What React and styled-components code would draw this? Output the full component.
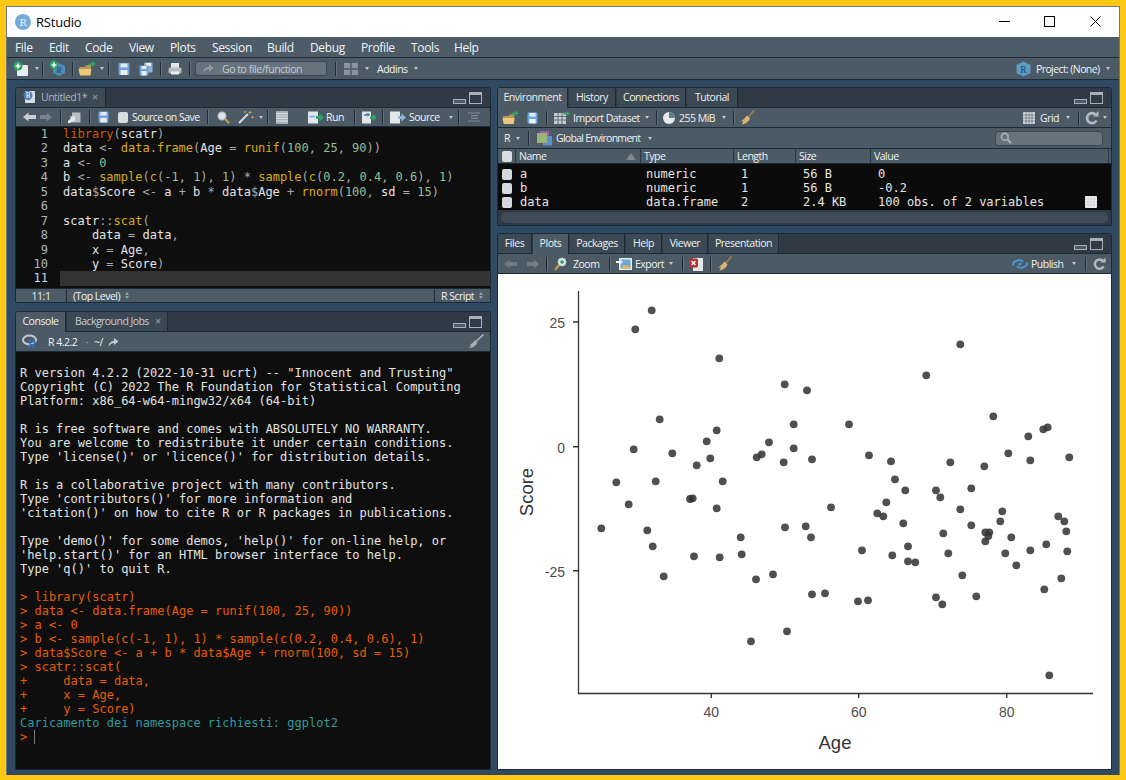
import React from "react";
import styled, { createGlobalStyle, css } from "styled-components";

const Global = createGlobalStyle`
  html, body { margin: 0; padding: 0; background: #ffc815; overflow: hidden; }
  #root { width: 1126px; height: 780px; }
  * { box-sizing: border-box; }
`;

const UI = `"Open Sans", "Noto Sans", sans-serif`;
const MONO = `"DejaVu Sans Mono", monospace`;

const place = css`
  flex: none;
  margin-left: ${(p) => (p.$auto ? "auto" : `${p.$ml || 0}px`)};
`;

const Window = styled.div`
  margin: 6px 6px 0;
  width: 1114px;
  height: 769px;
  border: 1px solid #6d7780;
  border-bottom: 0;
  background: #2f4a62;
  display: flex;
  flex-direction: column;
  font-family: ${UI};
  color: #f0f3f5;
`;
const TitleBar = styled.div`
  height: 30px;
  background: #fff;
  color: #000;
  display: flex;
  align-items: center;
  padding: 0 0 1px 8px;
  font-size: 13px;
  letter-spacing: -0.2px;
`;
const TitleText = styled.span`
  margin-left: 5px;
`;
const WinButtons = styled.div`
  margin-left: auto;
  display: flex;
  align-items: center;
  padding-right: 18px;
`;
const WinBtn = styled.svg`
  ${place}
  display: block;
`;
const MenuBar = styled.div`
  height: 21px;
  background: #4e5c68;
  border-bottom: 1px solid #1b2a38;
  display: flex;
  align-items: center;
  padding-left: 8px;
  font-size: 12px;
  letter-spacing: -0.35px;
`;
const MenuItem = styled.span`
  flex: none;
  width: ${(p) => p.$w}px;
`;
const MainBar = styled.div`
  height: 22px;
  background: #4c5a66;
  border-bottom: 1px solid #1b2a38;
  display: flex;
  align-items: center;
  padding-right: 9px;
`;
const Main = styled.div`
  flex: 1;
  display: grid;
  grid-template-columns: 476px 615px;
  column-gap: 6px;
  padding: 7px 7px 5px 8px;
  min-height: 0;
`;
const Column = styled.div`
  display: flex;
  flex-direction: column;
  gap: ${(p) => p.$gap}px;
  min-height: 0;
`;
const Pane = styled.section`
  height: ${(p) => (p.$h ? `${p.$h}px` : "auto")};
  flex: ${(p) => (p.$h ? "none" : "1")};
  display: flex;
  flex-direction: column;
  border: 1px solid #1b2a38;
  border-radius: 3px 3px 0 0;
  background: #4c5a66;
  overflow: hidden;
  min-height: 0;
`;
const TabBar = styled.div`
  height: 20px;
  flex: none;
  background: #2f3a45;
  border-bottom: 1px solid #1b2a38;
  display: flex;
  align-items: stretch;
  padding-right: 8px;
`;
const Tab = styled.div`
  flex: none;
  width: ${(p) => p.$w}px;
  margin-right: 1px;
  background: ${(p) => (p.$active ? "#4c5a66" : "#3b4955")};
  border-right: 1px solid #1b2a38;
  margin-bottom: ${(p) => (p.$active ? "-1px" : "0")};
  color: ${(p) => (p.$dim ? "#a9b4bd" : "#eef1f3")};
  font-size: 10.5px;
  letter-spacing: -0.45px;
  padding-bottom: ${(p) => (p.$active ? "3px" : "2px")};
  display: flex;
  align-items: center;
  justify-content: ${(p) => (p.$start ? "flex-start" : "center")};
  padding-left: ${(p) => (p.$start ? `${p.$start}px` : "0")};
`;
const TabClose = styled.span`
  margin-left: ${(p) => p.$ml}px;
  color: #7f8b95;
  font-size: 11px;
  font-weight: 700;
`;
const PaneCtl = styled.div`
  margin-left: auto;
  display: flex;
  align-items: center;
  gap: 3px;
`;
const Tool = styled.div`
  height: ${(p) => p.$h || 19}px;
  flex: none;
  background: #4c5a66;
  border-bottom: 1px solid #1b2a38;
  display: flex;
  align-items: center;
  padding-right: ${(p) => p.$pr || 0}px;
`;
const Ic = styled.svg`
  ${place}
  display: block;
`;
const Sep = styled.i`
  ${place}
  width: 2px;
  height: 14px;
  border-left: 1px solid #1d2b38;
  border-right: 1px solid #63707b;
`;
const Caret = styled.i`
  ${place}
  width: 0;
  height: 0;
  border-left: 2.5px solid transparent;
  border-right: 2.5px solid transparent;
  border-top: 3px solid #c0c8ce;
`;
const Updown = styled.span`
  ${place}
  display: inline-flex;
  flex-direction: column;
  gap: 1px;
`;
const Tri = styled.i`
  display: block;
  width: 0;
  height: 0;
  border-left: 2.5px solid transparent;
  border-right: 2.5px solid transparent;
  ${(p) => (p.$up ? "border-bottom: 3px solid #96a1aa;" : "border-top: 3px solid #96a1aa;")}
`;
const Label = styled.span`
  ${place}
  width: ${(p) => p.$w}px;
  font-size: 10.5px;
  letter-spacing: ${(p) => p.$ls ?? -0.5}px;
  white-space: nowrap;
  color: ${(p) => p.$c || "#eef1f3"};
`;
const Check = styled.i`
  ${place}
  width: 10px;
  height: 11px;
  background: #d9dde0;
  border-radius: 2px;
`;
const GoBox = styled.div`
  ${place}
  width: 132px;
  height: 15px;
  border: 1px solid #39464f;
  border-radius: 3px;
  background: #66727c;
  display: flex;
  align-items: center;
  padding-left: 6px;
`;
const SearchBox = styled.div`
  ${place}
  width: 108px;
  height: 15px;
  border: 1px solid #39464f;
  border-radius: 3px;
  background: #66727c;
  display: flex;
  align-items: center;
  padding-left: 4px;
`;
const BarEnd = styled.i`
  flex: none;
  width: ${(p) => p.$w}px;
`;

const Editor = styled.div`
  flex: 1;
  background: #0e0e0e;
  font-family: ${MONO};
  font-size: 12px;
  color: #e4e4e4;
  overflow: hidden;
`;
const Line = styled.div`
  height: 14.45px;
  line-height: 14.45px;
  display: flex;
  white-space: pre;
`;
const Gutter = styled.span`
  width: 44px;
  flex: none;
  text-align: right;
  padding-right: 12px;
  color: ${(p) => (p.$active ? "#c8d6e2" : "#a8b8c4")};
`;
const Code = styled.span`
  flex: 1;
  padding-left: 3px;
  background: ${(p) => (p.$active ? "#333333" : "transparent")};
`;
const Kw = styled.span`color: #cf5a00;`;
const Fn = styled.span`color: #d9ac16;`;
const Num = styled.span`color: #93bf93;`;
const Op = styled.span`color: #a9a9a9;`;

const Status = styled.div`
  height: 14px;
  flex: none;
  background: #4c5a66;
  border-top: 1px solid #1b2a38;
  display: flex;
  align-items: center;
  font-size: 10.5px;
  letter-spacing: -0.5px;
  color: #eef1f3;
`;
const StatusCell = styled.div`
  flex: none;
  width: ${(p) => p.$w}px;
  height: 100%;
  display: flex;
  align-items: center;
  justify-content: ${(p) => (p.$center ? "center" : "flex-start")};
  padding-left: ${(p) => (p.$center ? 0 : 6)}px;
  border-right: ${(p) => (p.$br ? "1px solid #1b2a38" : "0")};
  margin-left: ${(p) => (p.$auto ? "auto" : 0)};
  border-left: ${(p) => (p.$auto ? "1px solid #1b2a38" : "0")};
`;

const Console = styled.pre`
  flex: 1;
  margin: 0;
  padding: 14px 0 0 4px;
  background: #0e0e0e;
  font-family: ${MONO};
  font-size: 12px;
  line-height: 14px;
  color: #e4e4e4;
  overflow: hidden;
`;
const Echo = styled.span`color: #e85d04;`;
const Msg = styled.span`color: #2f9c9c;`;
const CursorBar = styled.i`
  display: inline-block;
  width: 1px;
  height: 14px;
  vertical-align: -3px;
  background: #7a7a7a;
`;

const EnvHead = styled.div`
  height: 15px;
  flex: none;
  display: flex;
  background: #4c5a66;
  border-bottom: 1px solid #1b2a38;
`;
const HeadCell = styled.div`
  flex: none;
  width: ${(p) => p.$w}px;
  border-right: 1px solid #2a3946;
  display: flex;
  align-items: center;
  padding-left: ${(p) => p.$pl ?? 3}px;
  font-size: 10.5px;
  letter-spacing: -0.5px;
  color: #eef1f3;
`;
const SortTri = styled.i`
  margin-left: auto;
  margin-right: 4px;
  width: 0;
  height: 0;
  border-left: 5px solid transparent;
  border-right: 5px solid transparent;
  border-bottom: 7px solid #7d8891;
`;
const EnvBody = styled.div`
  height: 46px;
  flex: none;
  background: #0b0b0b;
  padding-top: 3px;
  font-family: ${MONO};
  font-size: 12px;
  color: #e6e6e6;
`;
const EnvRow = styled.div`
  height: 14px;
  line-height: 14px;
  display: flex;
  align-items: center;
  white-space: pre;
`;
const EnvCell = styled.span`
  flex: none;
  width: ${(p) => p.$w}px;
`;
const RowCheck = styled.i`
  flex: none;
  margin: 0 8px 0 4px;
  width: 10px;
  height: 11px;
  background: #d5d9dc;
  border-radius: 2px;
`;
const Scroll = styled.div`
  flex: 1;
  background: #2f3a45;
  padding: 2px 3px 0;
`;
const ScrollThumb = styled.div`
  height: 11px;
  border-radius: 5px;
  background: #3f4c58;
`;
const PlotArea = styled.div`
  flex: 1;
  background: #fff;
  min-height: 0;
`;
const Chart = styled.svg`
  display: block;
`;
const TickText = styled.text`
  font-family: "Liberation Sans", sans-serif;
  font-size: 14px;
  fill: #4d4d4d;
`;
const AxisTitle = styled.text`
  font-family: "Liberation Sans", sans-serif;
  font-size: 18.5px;
  fill: #333;
`;

/* ---------- icons ---------- */
const Grn = "#2aa564";
const NewFile = (p) => (
  <Ic {...p} width="16" height="16" viewBox="0 0 16 16">
    <rect x="4" y="4" width="11" height="11" rx="1" fill="#e9edf0" />
    <circle cx="5" cy="5" r="4.6" fill={Grn} />
    <path d="M5 2.500v5M2.500 5h5" stroke="#fff" strokeWidth="1.600" />
  </Ic>
);
const NewProject = (p) => (
  <Ic {...p} width="17" height="17" viewBox="0 0 17 17">
    <path d="M10 3l6 3v7l-6 3-6-3V6z" fill="#4f8db3" />
    <text x="7.500" y="13" fontSize="8" fontFamily="Liberation Serif" fill="#16405f">R</text>
    <circle cx="5" cy="5" r="4.400" fill={Grn} />
    <path d="M5 2.600v4.800M2.600 5h4.800" stroke="#fff" strokeWidth="1.500" />
  </Ic>
);
const Folder = ({ w = 18, ...p }) => (
  <Ic {...p} width={w} height="15" viewBox="0 0 18 15">
    <path d="M1 6h6l1-2h5v10H2z" fill="#b8955a" />
    <path d="M0.500 8h13L12 14.500H2z" fill="#ecc87c" />
    <path d="M9 5c1-2.500 3-3 5-3V0l4 3-4 3V4c-2 0-3.500 0-5 1z" fill={Grn} />
  </Ic>
);
const Save = ({ w = 12, ...p }) => (
  <Ic {...p} width={w} height="14" viewBox="0 0 12 14">
    <rect x="0.500" y="1" width="11" height="12" rx="1" fill="#6ea3d8" />
    <rect x="2.500" y="1.500" width="7" height="4" fill="#dfe9f2" />
    <rect x="2.500" y="8" width="7" height="5" fill="#e9eef2" />
  </Ic>
);
const SaveAll = (p) => (
  <Ic {...p} width="14" height="14" viewBox="0 0 14 14">
    <rect x="5" y="0.500" width="8.500" height="10" rx="1" fill="#8db3d8" />
    <rect x="7" y="1" width="5" height="3" fill="#e6edf3" />
    <rect x="0.500" y="3.500" width="9" height="10" rx="1" fill="#6ea3d8" />
    <rect x="2.500" y="4" width="5" height="3" fill="#e6edf3" />
    <rect x="2.500" y="9" width="5" height="4.500" fill="#e9eef2" />
  </Ic>
);
const Printer = (p) => (
  <Ic {...p} width="14" height="14" viewBox="0 0 14 14">
    <rect x="3" y="1" width="8" height="5" fill="#e2e4e6" />
    <rect x="0.500" y="5.500" width="13" height="6" rx="1.500" fill="#b9bdc1" />
    <rect x="3" y="9.500" width="8" height="3" fill="#eceeef" />
  </Ic>
);
const GoArrow = (p) => (
  <Ic {...p} width="12" height="11" viewBox="0 0 12 11">
    <path d="M0.500 10.500C1 6 4 4 7 4V1l4.500 4L7 9V6.300C4.500 6.300 2.500 7.500 0.500 10.500z" fill="#929ca4" />
  </Ic>
);
const Panes = (p) => (
  <Ic {...p} width="14" height="12" viewBox="0 0 14 12">
    <path d="M0 0h6.300v5.300H0zM7.700 0H14v5.300H7.700zM0 6.700h6.300V12H0zM7.700 6.700H14V12H7.700z" fill="#8b959d" />
  </Ic>
);
const ProjectCube = (p) => (
  <Ic {...p} width="15" height="16" viewBox="0 0 15 16">
    <path d="M7.500 0.500l7 3.500v8l-7 3.500-7-3.500V4z" fill="#5f9ac0" />
    <text x="4.300" y="11.500" fontSize="9.500" fontFamily="Liberation Serif" fill="#17456a">R</text>
  </Ic>
);
const ArrowL = ({ fill = "#c8ced3", ...p }) => (
  <Ic {...p} width="13" height="10" viewBox="0 0 13 10">
    <path d="M0 5l5.500-4.500V3H13v4H5.500v2.500z" fill={fill} />
  </Ic>
);
const ArrowR = ({ fill = "#77838c", ...p }) => (
  <Ic {...p} width="12" height="10" viewBox="0 0 12 10">
    <path d="M12 5L6.800.5V3H0v4h6.800v2.500z" fill={fill} />
  </Ic>
);
const ShowWin = (p) => (
  <Ic {...p} width="13" height="11" viewBox="0 0 13 11">
    <rect x="4" y="0.500" width="8.500" height="10" fill="#b7bec4" />
    <path d="M0 9l3-3-1.500-1.500H7V10L5.500 8.500 2.500 11H0z" fill="#e3e6e8" />
  </Ic>
);
const Magnifier = (p) => (
  <Ic {...p} width="13" height="13" viewBox="0 0 13 13">
    <circle cx="5" cy="5" r="3.700" fill="#dfe6ec" stroke="#c0c6cb" strokeWidth="1.500" />
    <path d="M7.800 7.800l4.300 4.300" stroke="#c09a55" strokeWidth="2.200" />
  </Ic>
);
const Wand = (p) => (
  <Ic {...p} width="16" height="14" viewBox="0 0 16 14">
    <path d="M1 13L10 4" stroke="#d8dcdf" strokeWidth="2" />
    <path d="M12 1v3M10.500 2.500h3M14.500 6v2.500M13.200 7.200h2.600M7 1v2M6 2h2" stroke="#c9a152" strokeWidth="1" />
  </Ic>
);
const Lines = (p) => (
  <Ic {...p} width="12" height="13" viewBox="0 0 12 13">
    <rect width="12" height="13" rx="1" fill="#aab2b8" />
    <path d="M0 2.500h12M0 5h12M0 7.500h12M0 10h12" stroke="#dfe3e5" />
  </Ic>
);
const RunIc = (p) => (
  <Ic {...p} width="16" height="13" viewBox="0 0 16 13">
    <rect x="0" y="0.500" width="10" height="12" fill="#e4e7e9" />
    <rect x="1.500" y="4.500" width="6" height="2" fill="#8fb6d8" />
    <path d="M8 5h3.500V2.500L16 6.500l-4.500 4V8H8z" fill={Grn} />
  </Ic>
);
const RerunIc = (p) => (
  <Ic {...p} width="15" height="13" viewBox="0 0 15 13">
    <rect x="0" y="0.500" width="9" height="12" fill="#e4e7e9" />
    <path d="M2 5c0-2 2-2.500 3.500-2V1.500L8 3.800 5.500 6V4.500C4 4.300 3 4.500 2 5z" fill="#3178b8" />
    <path d="M8 5.500h2.500V3L15 6.500l-4.500 3.500V7.800H8z" fill={Grn} />
  </Ic>
);
const SourceIc = (p) => (
  <Ic {...p} width="16" height="13" viewBox="0 0 16 13">
    <rect x="0" y="0.500" width="10" height="12" fill="#e4e7e9" />
    <path d="M8 5h3.500V2.500L16 6.500l-4.500 4V8H8z" fill="#8fb6d8" />
  </Ic>
);
const Outline = (p) => (
  <Ic {...p} width="12" height="10" viewBox="0 0 12 10">
    <path d="M0 1h12M3 3.700h7M3 6.300h7M0 9h12" stroke="#7f8a93" strokeWidth="1.200" />
  </Ic>
);
const Broom = ({ w = 15, ...p }) => (
  <Ic {...p} width={w} height="15" viewBox="0 0 15 15">
    <path d="M14 0.500L8.500 7" stroke="#a17f52" strokeWidth="1.600" />
    <path d="M7 5.500l3 2.800C9.500 11 6 14 1.500 14.500 3 13 3.300 12 3 11c-1 .5-1.700.5-2.500.5C3 10 5 8 7 5.500z" fill="#d9b46e" />
  </Ic>
);
const ConsoleBroom = (p) => (
  <Ic {...p} width="16" height="15" viewBox="0 0 16 15">
    <path d="M15.500 0.500L8 7.500" stroke="#b7bfc5" strokeWidth="1.300" />
    <path d="M7 6l2.500 2.500C8 12 4 14 0.500 14.500 2 13.500 3 12 3.500 11c-1 .5-2 .6-2.500.6C3.500 10 5.500 8 7 6z" fill="#a7afb5" />
  </Ic>
);
const RLogo = (p) => (
  <Ic {...p} width="16" height="15" viewBox="0 0 16 15">
    <ellipse cx="7.500" cy="6" rx="6.500" ry="4.500" fill="none" stroke="#c3cad0" strokeWidth="2" />
    <text x="6.500" y="13.500" fontSize="10.500" fontWeight="700" fontFamily="Liberation Sans" fill="#2a6fd0">R</text>
  </Ic>
);
const ShareArrow = (p) => (
  <Ic {...p} width="11" height="10" viewBox="0 0 11 10">
    <path d="M0.500 9.500C1 5.500 3.500 4 6 4V1l4.500 3.500L6 8V6C4 6 2.300 7 0.500 9.500z" fill="#c2c9ce" />
  </Ic>
);
const ImportIc = (p) => (
  <Ic {...p} width="16" height="14" viewBox="0 0 16 14">
    <rect x="0" y="2" width="12" height="11" fill="#c6cbcf" />
    <path d="M0 5.500h12M0 9h12M4 2v11M8 2v11" stroke="#64707a" />
    <path d="M9 4c1-2.500 2.500-3 4-3V0l3 2.500L13 5V3.500C11.500 3.500 10 3.500 9 4z" fill={Grn} />
  </Ic>
);
const Pie = (p) => (
  <Ic {...p} width="12" height="12" viewBox="0 0 12 12">
    <circle cx="6" cy="6" r="6" fill="#e7ebee" />
    <path d="M6 6V0a6 6 0 0 1 6 6z" fill="#5d7f93" />
  </Ic>
);
const GridIc = ({ bg = "#d4d8db", line = "#5f6b75", ...p }) => (
  <Ic {...p} width="12" height="12" viewBox="0 0 12 12">
    <rect width="12" height="12" rx="1" fill={bg} />
    <path d="M0 3h12M0 6h12M0 9h12M3 0v12M6 0v12M9 0v12" stroke={line} strokeWidth=".7" />
  </Ic>
);
const Refresh = ({ w = 14, ...p }) => (
  <Ic {...p} width={w} height="14" viewBox="0 0 14 14">
    <path d="M11.500 9.500A5 5 0 1 1 10.500 3.500" fill="none" stroke="#b3bbc1" strokeWidth="2.600" />
    <path d="M8 5.500h5.500V0z" fill="#b3bbc1" />
  </Ic>
);
const EnvStack = (p) => (
  <Ic {...p} width="15" height="15" viewBox="0 0 15 15">
    <rect x="3" y="0" width="9" height="9" fill="#9a5fa8" />
    <rect x="6" y="5" width="9" height="9.500" fill="#5d8fc9" />
    <rect x="0" y="2" width="10" height="10" fill="#9db37a" />
  </Ic>
);
const SearchIc = (p) => (
  <Ic {...p} width="12" height="12" viewBox="0 0 12 12">
    <circle cx="4.800" cy="4.800" r="3.400" fill="none" stroke="#a9b1b7" strokeWidth="1.600" />
    <path d="M7.300 7.300L11 11" stroke="#a9b1b7" strokeWidth="2" />
  </Ic>
);
const ZoomIc = (p) => (
  <Ic {...p} width="13" height="14" viewBox="0 0 13 14">
    <circle cx="8" cy="5" r="4" fill="#dfe6ec" stroke="#c0c6cb" />
    <path d="M8 3v4M6 5h4" stroke={Grn} strokeWidth="1.500" />
    <path d="M5 8l-4 5" stroke="#c09a55" strokeWidth="2.200" />
  </Ic>
);
const ExportIc = (p) => (
  <Ic {...p} width="16" height="13" viewBox="0 0 16 13">
    <rect x="3" y="1" width="13" height="12" fill="#e8ebee" />
    <rect x="4.500" y="2.500" width="10" height="9" fill="#6ea7d8" />
    <path d="M4.500 11.500l4-4 2 2 2-1.500 2 3.500z" fill="#e2bb58" />
    <path d="M0 4h3V2l4 3-4 3V6H0z" fill="#f2f4f5" />
  </Ic>
);
const DeleteIc = (p) => (
  <Ic {...p} width="14" height="14" viewBox="0 0 14 14">
    <rect x="4" y="1" width="10" height="13" fill="#e6e9eb" />
    <rect x="0" y="1.500" width="9" height="9" rx="1.500" fill="#b8322e" />
    <path d="M2.500 4l4 4M6.500 4l-4 4" stroke="#fff" strokeWidth="1.400" />
  </Ic>
);
const PublishIc = (p) => (
  <Ic {...p} width="16" height="12" viewBox="0 0 16 12">
    <path d="M1 7.500C1 2 9 1 11 4" fill="none" stroke="#4b94d2" strokeWidth="2" />
    <path d="M15 4.500c0 5.500-8 6.500-10 3.500" fill="none" stroke="#4b94d2" strokeWidth="2" />
    <circle cx="8" cy="6" r="1.600" fill="#4b94d2" />
  </Ic>
);
const RDoc = () => (
  <Ic width="13" height="14" viewBox="0 0 13 14">
    <rect x="2" y="1" width="10" height="12" rx="1" fill="#d7dde2" />
    <circle cx="5" cy="5.500" r="4.500" fill="#4f7fb0" />
    <text x="2.800" y="8.300" fontSize="7.500" fontFamily="Liberation Serif" fill="#fff">R</text>
  </Ic>
);
const Controls = () => (
  <PaneCtl>
    <svg width="13" height="12" viewBox="0 0 13 12">
      <rect x="0.500" y="7.500" width="12" height="4" fill="#4c5a66" stroke="#a7b0b7" />
    </svg>
    <svg width="13" height="12" viewBox="0 0 13 12">
      <rect x="0.500" y="0.500" width="12" height="11" fill="#2f3a45" stroke="#a7b0b7" />
      <path d="M1 2h11" stroke="#a7b0b7" strokeWidth="2" />
    </svg>
  </PaneCtl>
);
const UpDown = (p) => (
  <Updown {...p}>
    <Tri $up />
    <Tri />
  </Updown>
);

/* ---------- data ---------- */
const points = [
  [651.7,310.3],[635.3,329.3],[719.3,358.3],[784.7,384.3],[807,390.3],[659.7,419.3],[793.7,424.3],[716.7,430.3],[706.7,441.3],[769,442.3],[633.7,449.3],[793.7,448.3],[672.3,453.3],[761.7,454.3],[756.7,457.3],[710.3,458.3],[783.7,462.3],[696.7,465.3],[616.3,482.3],[655.7,481.3],[722.7,481.3],[690,499],[692.7,498.3],[628.7,504.3],[716.7,508.3],
  [960.3,344.3],[926.3,375.3],[993.3,416.3],[849,424.3],[1047.7,427.3],[1043.3,429.3],[1028.3,436.3],[1008.3,453.3],[869,455.3],[1069.3,457.3],[812,459.3],[891,461.3],[1030.3,460.3],[950.3,462.3],[984.3,466.3],[895,479.3],[905.3,490.3],[936,490.3],[971.3,488.3],[940.3,497.3],[886.3,502.3],[831,507.3],[960.3,509.3],[1002.3,511.3],[877.3,513.3],[883.3,516.3],[1058.3,516.3],[1064.3,521.3],[1000.3,521.3],[903.3,523.3],[971.3,525.3],[805.7,526.3],[1066.3,531.3],[943.3,533.3],[985.3,532.3],[989.3,532.3],[988.3,536],[1011.3,537.3],[811,537.3],[985.3,541.3],
  [862,550.3],[892.3,555.3],[908,546.3],[908,561.3],[915.3,562.3],[948.3,553.3],[962.3,575.3],[1005.3,553.3],[1016.3,565.3],[1030.3,550.3],[1046.3,544.3],[1067.3,551.3],[1061.3,578.3],[1044.3,589.3],[812,594.3],[825,593.3],[858,601.3],[868,600.3],[936,597.3],[942.3,604.3],[976.3,596.3],[1049.3,675.3],
  [601.3,528.3],[647.3,530.3],[652.7,546.3],[663.7,576.3],[694,556.3],[719.7,557.3],[740.7,537.3],[741.7,554.3],[756,579.3],[773,574.3],[785,527.3],[787,631.3],[751,641.3],
];
const menu = [["File",34],["Edit",36],["Code",44],["View",41],["Plots",42],["Session",55],["Build",43],["Debug",51],["Profile",50],["Tools",43],["Help",40]];

const consoleStart = `R version 4.2.2 (2022-10-31 ucrt) -- "Innocent and Trusting"
Copyright (C) 2022 The R Foundation for Statistical Computing
Platform: x86_64-w64-mingw32/x64 (64-bit)

R is free software and comes with ABSOLUTELY NO WARRANTY.
You are welcome to redistribute it under certain conditions.
Type 'license()' or 'licence()' for distribution details.

R is a collaborative project with many contributors.
Type 'contributors()' for more information and
'citation()' on how to cite R or R packages in publications.

Type 'demo()' for some demos, 'help()' for on-line help, or
'help.start()' for an HTML browser interface to help.
Type 'q()' to quit R.

`;
const consoleEcho = `> library(scatr)
> data <- data.frame(Age = runif(100, 25, 90))
> a <- 0
> b <- sample(c(-1, 1), 1) * sample(c(0.2, 0.4, 0.6), 1)
> data$Score <- a + b * data$Age + rnorm(100, sd = 15)
> scatr::scat(
+     data = data,
+     x = Age,
+     y = Score)
`;

const codeLines = [
  <><Kw>library</Kw><Op>(</Op>scatr<Op>)</Op></>,
  <>data <Op>&lt;-</Op> <Fn>data.frame</Fn><Op>(</Op>Age <Op>=</Op> <Fn>runif</Fn><Op>(</Op><Num>100</Num><Op>,</Op> <Num>25</Num><Op>,</Op> <Num>90</Num><Op>))</Op></>,
  <>a <Op>&lt;-</Op> <Num>0</Num></>,
  <>b <Op>&lt;-</Op> <Fn>sample</Fn><Op>(</Op><Fn>c</Fn><Op>(-</Op><Num>1</Num><Op>,</Op> <Num>1</Num><Op>),</Op> <Num>1</Num><Op>)</Op> <Op>*</Op> <Fn>sample</Fn><Op>(</Op><Fn>c</Fn><Op>(</Op><Num>0.2</Num><Op>,</Op> <Num>0.4</Num><Op>,</Op> <Num>0.6</Num><Op>),</Op> <Num>1</Num><Op>)</Op></>,
  <>data<Op>$</Op>Score <Op>&lt;-</Op> a <Op>+</Op> b <Op>*</Op> data<Op>$</Op>Age <Op>+</Op> <Fn>rnorm</Fn><Op>(</Op><Num>100</Num><Op>,</Op> sd <Op>=</Op> <Num>15</Num><Op>)</Op></>,
  <></>,
  <>scatr<Op>::</Op><Fn>scat</Fn><Op>(</Op></>,
  <>    data <Op>=</Op> data<Op>,</Op></>,
  <>    x <Op>=</Op> Age<Op>,</Op></>,
  <>    y <Op>=</Op> Score<Op>)</Op></>,
  <></>,
];

const envRows = [
  ["a", "numeric", "1", "56 B", "0"],
  ["b", "numeric", "1", "56 B", "-0.2"],
  ["data", "data.frame", "2", "2.4 KB", "100 obs. of 2 variables"],
];

export default function App() {
  return (
    <>
      <Global />
      <Window>
        <TitleBar>
          <svg width="16" height="16" viewBox="0 0 16 16">
            <circle cx="8" cy="8" r="8" fill="#75aadb" />
            <text x="4.500" y="12" fontSize="11" fontFamily="Liberation Serif" fill="#e8f1fa">R</text>
          </svg>
          <TitleText>RStudio</TitleText>
          <WinButtons>
            <WinBtn width="11" height="11" viewBox="0 0 11 11"><path d="M0 5.500h11" stroke="#000" /></WinBtn>
            <WinBtn $ml={34} width="11" height="11" viewBox="0 0 11 11"><rect x=".5" y=".5" width="10" height="10" fill="none" stroke="#000" /></WinBtn>
            <WinBtn $ml={35} width="11" height="11" viewBox="0 0 11 11"><path d="M.5.500l10 10M10.500.500l-10 10" stroke="#000" /></WinBtn>
          </WinButtons>
        </TitleBar>
        <MenuBar>
          {menu.map(([m, w]) => <MenuItem key={m} $w={w}>{m}</MenuItem>)}
        </MenuBar>
        <MainBar>
          <NewFile $ml={6} />
          <Caret $ml={6} />
          <Sep $ml={3} />
          <NewProject $ml={5} />
          <Sep $ml={6} />
          <Folder $ml={4} />
          <Caret $ml={4} />
          <Sep $ml={4} />
          <Save $ml={8} />
          <SaveAll $ml={9} />
          <Sep $ml={7} />
          <Printer $ml={6} />
          <Sep $ml={7} />
          <GoBox $ml={4}>
            <GoArrow />
            <Label $ml={8} $w={90} $c="#c4cbd0" $ls={-0.45}>Go to file/function</Label>
          </GoBox>
          <Sep $ml={8} />
          <Panes $ml={7} />
          <Caret $ml={7} />
          <Label $ml={8} $w={30}>Addins</Label>
          <Caret $ml={7} />
          <ProjectCube $auto />
          <Label $ml={5} $w={65} $ls={-0.6}>Project: (None)</Label>
          <Caret $ml={5} />
        </MainBar>
        <Main>
          <Column $gap={8}>
            <Pane $h={216}>
              <TabBar>
                <Tab $w={90} $start={7} $dim>
                  <RDoc />
                  <Label $ml={5} $w={44} $c="#a9b4bd">Untitled1*</Label>
                  <TabClose $ml={7}>×</TabClose>
                </Tab>
                <Controls />
              </TabBar>
              <Tool>
                <ArrowL $ml={7} />
                <ArrowR $ml={4} />
                <Sep $ml={8} />
                <ShowWin $ml={6} />
                <Sep $ml={8} />
                <Save $ml={7} w={11} />
                <Check $ml={9} />
                <Label $ml={4} $w={67}>Source on Save</Label>
                <Sep $ml={8} />
                <Magnifier $ml={8} />
                <Wand $ml={8} />
                <Caret $ml={5} />
                <Sep $ml={4} />
                <Lines $ml={7} />
                <RunIc $ml={20} />
                <Label $ml={2} $w={17}>Run</Label>
                <Sep $ml={11} />
                <RerunIc $ml={6} />
                <Sep $ml={5} />
                <SourceIc $ml={6} />
                <Label $ml={3} $w={30}>Source</Label>
                <Caret $ml={10} />
                <Sep $ml={5} />
                <Outline $ml={8} />
              </Tool>
              <Editor>
                {codeLines.map((c, i) => (
                  <Line key={i}>
                    <Gutter $active={i === 10}>{i + 1}</Gutter>
                    <Code $active={i === 10}>{c}</Code>
                  </Line>
                ))}
              </Editor>
              <Status>
                <StatusCell $w={51} $center $br>11:1</StatusCell>
                <StatusCell $w={100}>(Top Level)<UpDown $ml={5} /></StatusCell>
                <StatusCell $w={56} $auto>R Script<UpDown $ml={5} /></StatusCell>
              </Status>
            </Pane>
            <Pane>
              <TabBar>
                <Tab $w={50} $active>Console</Tab>
                <Tab $w={101} $start={8} $dim>
                  <Label $w={74} $c="#c4ccd2" $ls={-0.55}>Background Jobs</Label>
                  <TabClose $ml={6}>×</TabClose>
                </Tab>
                <Controls />
              </TabBar>
              <Tool $h={20}>
                <RLogo $ml={6} />
                <Label $ml={10} $w={33}>R 4.2.2</Label>
                <Label $ml={5} $w={8} $c="#a9b4bd">·</Label>
                <Label $ml={0} $w={12}>~/</Label>
                <ShareArrow $ml={2} />
                <ConsoleBroom $auto />
                <BarEnd $w={6} />
              </Tool>
              <Console>{consoleStart}<Echo>{consoleEcho}</Echo><Msg>Caricamento dei namespace richiesti: ggplot2{"\n"}</Msg><Echo>&gt; </Echo><CursorBar /></Console>
            </Pane>
          </Column>
          <Column $gap={7}>
            <Pane $h={139}>
              <TabBar>
                <Tab $w={70} $active>Environment</Tab>
                <Tab $w={47}>History</Tab>
                <Tab $w={69}>Connections</Tab>
                <Tab $w={51}>Tutorial</Tab>
                <Controls />
              </TabBar>
              <Tool $h={20} $pr={4}>
                <Folder $ml={4} w={17} />
                <Save $ml={8} w={11} />
                <Sep $ml={8} />
                <ImportIc $ml={6} />
                <Label $ml={3} $w={65}>Import Dataset</Label>
                <Caret $ml={7} />
                <Sep $ml={7} />
                <Pie $ml={5} />
                <Label $ml={4} $w={36}>255 MiB</Label>
                <Caret $ml={7} />
                <Sep $ml={7} />
                <Broom $ml={5} />
                <GridIc $auto />
                <Label $ml={5} $w={19}>Grid</Label>
                <Caret $ml={7} />
                <Sep $ml={8} />
                <Refresh $ml={5} />
                <Caret $ml={4} />
              </Tool>
              <Tool $h={21} $pr={8}>
                <Label $ml={6} $w={6}>R</Label>
                <Caret $ml={6} />
                <Sep $ml={8} />
                <EnvStack $ml={7} />
                <Label $ml={4} $w={86} $ls={-0.72}>Global Environment</Label>
                <Caret $ml={6} />
                <SearchBox $auto><SearchIc /></SearchBox>
              </Tool>
              <EnvHead>
                <HeadCell $w={18} $pl={4}><Check /></HeadCell>
                <HeadCell $w={125}>Name<SortTri /></HeadCell>
                <HeadCell $w={93}>Type</HeadCell>
                <HeadCell $w={62}>Length</HeadCell>
                <HeadCell $w={75}>Size</HeadCell>
                <HeadCell $w={238}>Value</HeadCell>
              </EnvHead>
              <EnvBody>
                {envRows.map((r, i) => (
                  <EnvRow key={r[0]}>
                    <RowCheck />
                    <EnvCell $w={126}>{r[0]}</EnvCell>
                    <EnvCell $w={95}>{r[1]}</EnvCell>
                    <EnvCell $w={62}>{r[2]}</EnvCell>
                    <EnvCell $w={75}>{r[3]}</EnvCell>
                    <EnvCell $w={207}>{r[4]}</EnvCell>
                    {i === 2 && <GridIc bg="#eef0f2" line="#c4cacf" />}
                  </EnvRow>
                ))}
              </EnvBody>
              <Scroll><ScrollThumb /></Scroll>
            </Pane>
            <Pane>
              <TabBar>
                <Tab $w={34}>Files</Tab>
                <Tab $w={36} $active>Plots</Tab>
                <Tab $w={55}>Packages</Tab>
                <Tab $w={36}>Help</Tab>
                <Tab $w={45}>Viewer</Tab>
                <Tab $w={70}>Presentation</Tab>
                <Controls />
              </TabBar>
              <Tool $h={20} $pr={5}>
                <ArrowL $ml={6} fill="#6f7b85" />
                <ArrowR $ml={10} fill="#6f7b85" />
                <Sep $ml={7} />
                <ZoomIc $ml={6} />
                <Label $ml={6} $w={26}>Zoom</Label>
                <Sep $ml={10} />
                <ExportIc $ml={5} />
                <Label $ml={3} $w={29}>Export</Label>
                <Caret $ml={5} />
                <Sep $ml={9} />
                <DeleteIc $ml={5} />
                <Sep $ml={7} />
                <Broom $ml={5} w={16} />
                <PublishIc $auto />
                <Label $ml={3} $w={32}>Publish</Label>
                <Caret $ml={9} />
                <Sep $ml={9} />
                <Refresh $ml={6} w={13} />
              </Tool>
              <PlotArea>
                <Chart width="613" height="495" viewBox="498 274 613 495">
                  <path d="M578.500 291V693.500H1093" fill="none" stroke="#333" strokeWidth="1.300" />
                  <path d="M573 322h5M573 446.700h5M573 570.700h5M711.300 693v5M858.700 693v5M1006.700 693v5" stroke="#333" strokeWidth="1.400" />
                  <TickText x="565" y="328" textAnchor="end">25</TickText>
                  <TickText x="565" y="453" textAnchor="end">0</TickText>
                  <TickText x="565" y="577" textAnchor="end">-25</TickText>
                  <TickText x="711.300" y="717" textAnchor="middle">40</TickText>
                  <TickText x="858.700" y="717" textAnchor="middle">60</TickText>
                  <TickText x="1006.700" y="717" textAnchor="middle">80</TickText>
                  <AxisTitle x="835" y="749" textAnchor="middle">Age</AxisTitle>
                  <AxisTitle transform="rotate(-90 533 492)" x="533" y="492" textAnchor="middle">Score</AxisTitle>
                  {points.map(([x, y], i) => (
                    <circle key={i} cx={x} cy={y} r="3.900" fill="#333" fillOpacity="0.86" />
                  ))}
                </Chart>
              </PlotArea>
            </Pane>
          </Column>
        </Main>
      </Window>
    </>
  );
}
